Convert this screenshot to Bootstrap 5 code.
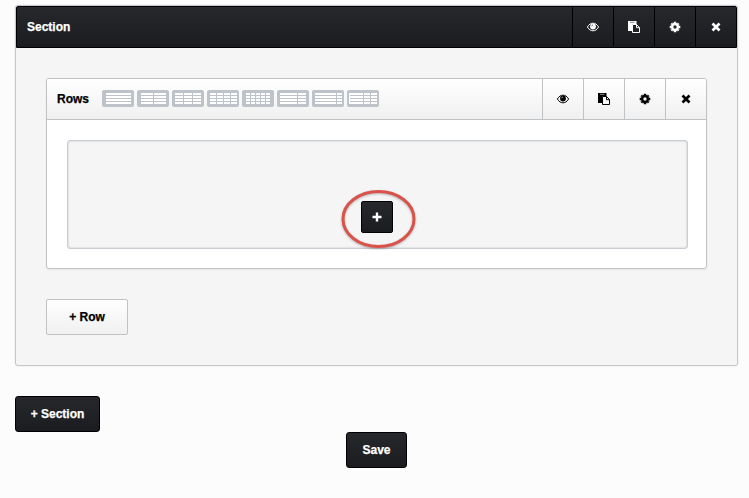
<!DOCTYPE html>
<html lang="en">
<head>
<meta charset="utf-8">
<meta name="viewport" content="width=device-width, initial-scale=1">
<title>Page builder</title>
<link href="https://cdn.jsdelivr.net/npm/bootstrap@5.3.0/dist/css/bootstrap.min.css" rel="stylesheet">
<style>
body{background:#fcfcfc;font:bold 12px/18px "Liberation Sans",Arial,sans-serif;-webkit-text-stroke:.25px currentColor;color:#000;height:498px;overflow:hidden;padding:5px 11px 0 15px}
.builder{height:361px;background:#f5f5f5;border:1px solid #c5c8ca;border-radius:3px;box-shadow:0 0 2px #0002}
.bar-dark{height:42px;background:linear-gradient(#26282b,#1a1c1f);border:1px solid #000;border-radius:2px 2px 0 0;color:#fff;padding-left:10px}
.bar-light{height:41px;background:linear-gradient(#fff,#f0f0f0);border-bottom:1px solid #bfc3c6;border-radius:2px 2px 0 0;padding-left:10px}
.tool{width:41px;padding:0;border:0;border-left:1px solid #bfc3c6;background:none;color:inherit;display:flex;align-items:center;justify-content:center}
.bar-dark .tool{border-color:#000}
.row-box{margin:30px 30px 0;height:191px;background:#fff;border:1px solid #bfc3c6;border-radius:3px;box-shadow:0 1px 2px #0001}
.drop{margin:20px 18px 0 20px;height:109px;background:#f5f5f5;border:1px solid #c9ccd0;border-radius:3px;box-shadow:inset 0 0 2px #b5bac2;padding:0 2px 15px 0}
.push{border-radius:2px;height:36px;padding:0;font:inherit;display:flex;align-items:center;justify-content:center}
.push-dark,.push-dark:hover{background:linear-gradient(#26282b,#1a1c1f);border:1px solid #000;color:#fff}
.push-light,.push-light:hover{background:linear-gradient(#fff,#f0f0f0);border:1px solid #bfc3c6;color:#000}
.add-row{width:82px;margin:30px 0 0 30px}
.add-section{width:85px;margin-top:30px;border-radius:3px}
.save{width:61px;border-radius:3px}
.add-block{width:32px;height:32px}
.ring{left:50%;bottom:-1px;width:80px;height:66px;margin-left:-39.5px;pointer-events:none;filter:drop-shadow(0 1px 1px #0004)}
.layouts{gap:3px;margin:0 0 1px 13px}
svg{display:block;overflow:visible}
</style>
<script src="https://cdn.jsdelivr.net/npm/bootstrap@5.3.0/dist/js/bootstrap.bundle.min.js"></script>
</head>
<body>
<svg class="d-none">
  <symbol id="eye" viewBox="0 0 12 10"><path d="M.4 5C2 2.400 3.800 1.200 6 1.200S10 2.400 11.600 5C10 7.600 8.200 8.800 6 8.800S2 7.600.4 5z" fill="none" stroke="currentColor" stroke-width="1"/><circle cx="6" cy="4.500" r="2.900" fill="currentColor"/><path d="M4.600 4.300Q4.700 3 6 2.900" fill="none" stroke="var(--cut)" stroke-width=".6"/></symbol>
  <symbol id="paste" viewBox="0 0 12 12"><path d="M0 0h8.500V3H4.500v7H0z" fill="currentColor"/><path d="M2 1.300h4.500" stroke="var(--cut)" stroke-width=".8" opacity=".7"/><path d="M4.500 3.500h4l3 3v5h-7zM8.500 3.500v3.200h3" fill="var(--cut)" stroke="currentColor"/></symbol>
  <symbol id="gear" viewBox="0 0 12 12"><circle cx="6" cy="6" r="2.900" fill="none" stroke="currentColor" stroke-width="2.500"/><path d="M6 2V.7M6 10v1.300M2 6H.7M10 6h1.300M3.100 3.100l-.8-.8M8.900 8.900l.8.8M8.900 3.100l.8-.8M3.100 8.900l-.8.8" stroke="currentColor" stroke-width="2.400"/></symbol>
  <symbol id="cross" viewBox="0 0 10 10"><path d="M1.500 1.500l7 7M8.500 1.500l-7 7" stroke="currentColor" stroke-width="2.700"/></symbol>
  <symbol id="base" viewBox="0 0 32 17"><rect width="32" height="17" rx="2" fill="#bdc3c9"/></symbol>
  <symbol id="lines" viewBox="0 0 32 17"><path d="M3 5.500h27M3 8.500h27M3 11.500h27" stroke="#bdc3c9"/></symbol>
</svg>

<main class="builder">
  <header class="bar-dark d-flex align-items-center" style="--cut:#202225">
    <span>Section</span>
    <div class="d-flex ms-auto align-self-stretch">
      <button class="tool" aria-label="Toggle section"><svg width="12" height="10"><use href="#eye"/></svg></button>
      <button class="tool" aria-label="Duplicate section"><svg width="12" height="12"><use href="#paste"/></svg></button>
      <button class="tool" aria-label="Section settings"><svg width="12" height="12"><use href="#gear"/></svg></button>
      <button class="tool" aria-label="Remove section"><svg width="10" height="10"><use href="#cross"/></svg></button>
    </div>
  </header>
  <section class="row-box">
    <header class="bar-light d-flex align-items-center" style="--cut:#f8f8f8">
      <span>Rows</span>
      <div class="layouts d-flex">
        <svg width="32" height="17"><use href="#base" width="32" height="17"/><path fill="#fff" d="M4 3h25v11H4z"/><use href="#lines" width="32" height="17"/></svg>
        <svg width="32" height="17"><use href="#base" width="32" height="17"/><path fill="#fff" d="M4 3h12v11H4zM17 3h12v11H17z"/><use href="#lines" width="32" height="17"/></svg>
        <svg width="32" height="17"><use href="#base" width="32" height="17"/><path fill="#fff" d="M3 3h8v11H3zM12 3h8v11h-8zM21 3h8v11h-8z"/><use href="#lines" width="32" height="17"/></svg>
        <svg width="32" height="17"><use href="#base" width="32" height="17"/><path fill="#fff" d="M3 3h6v11H3zM10 3h6v11h-6zM17 3h6v11h-6zM24 3h6v11h-6z"/><use href="#lines" width="32" height="17"/></svg>
        <svg width="32" height="17"><use href="#base" width="32" height="17"/><path fill="#fff" d="M4 3h4v11H4zM9 3h4v11H9zM14 3h4v11h-4zM19 3h4v11h-4zM24 3h4v11h-4z"/><use href="#lines" width="32" height="17"/></svg>
        <svg width="32" height="17"><use href="#base" width="32" height="17"/><path fill="#fff" d="M3 3h17v11H3zM21 3h8v11h-8z"/><use href="#lines" width="32" height="17"/></svg>
        <svg width="32" height="17"><use href="#base" width="32" height="17"/><path fill="#fff" d="M3 3h21v11H3zM25 3h5v11h-5z"/><use href="#lines" width="32" height="17"/></svg>
        <svg width="32" height="17"><use href="#base" width="32" height="17"/><path fill="#fff" d="M2 3h14v11H2zM17 3h6v11h-6zM24 3h6v11h-6z"/><use href="#lines" width="32" height="17"/></svg>
      </div>
      <div class="d-flex ms-auto align-self-stretch">
        <button class="tool" aria-label="Toggle row"><svg width="12" height="10"><use href="#eye"/></svg></button>
        <button class="tool" aria-label="Duplicate row"><svg width="12" height="12"><use href="#paste"/></svg></button>
        <button class="tool" aria-label="Row settings"><svg width="12" height="12"><use href="#gear"/></svg></button>
        <button class="tool" aria-label="Remove row"><svg width="10" height="10"><use href="#cross"/></svg></button>
      </div>
    </header>
    <div class="drop position-relative d-flex align-items-end justify-content-center">
      <button class="btn push push-dark add-block" aria-label="Add block"><svg width="10" height="10"><path d="M5 .5v9M.5 5h9" stroke="#fff" stroke-width="2.400"/></svg></button>
      <svg class="ring position-absolute" viewBox="0 0 80 66"><ellipse cx="40.500" cy="36" rx="35.500" ry="27.500" fill="none" stroke="#d9534b" stroke-width="3"/></svg>
    </div>
  </section>
  <button class="btn push push-light add-row">+ Row</button>
</main>
<button class="btn push push-dark add-section">+ Section</button>
<div class="d-flex justify-content-center"><button class="btn push push-dark save">Save</button></div>
</body>
</html>
